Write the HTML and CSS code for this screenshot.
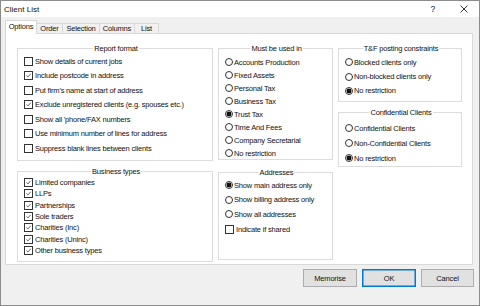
FILE: index.html
```html
<!DOCTYPE html>
<html lang="en">
<head>
    <meta charset="UTF-8">
    <title>Client List</title>
    <link rel="stylesheet" href="styles.css">
</head>
<body>
    <div class="window">
        <div class="titlebar">
            <span class="title">Client List</span>
            <span class="help">?</span>
            <svg class="close" width="8" height="8" viewBox="0 0 8 8">
                <path d="M0.5 0.5 L7.5 7.5 M7.5 0.5 L0.5 7.5" stroke="#222" stroke-width="0.9"/>
            </svg>
        </div>

        <div class="tabs">
            <div class="tab active tab-options">Options</div>
            <div class="tab tab-order">Order</div>
            <div class="tab tab-selection">Selection</div>
            <div class="tab tab-columns">Columns</div>
            <div class="tab tab-list">List</div>
        </div>

        <div class="panel">
            <div class="col col-left">
                <div class="group report">
                    <div class="group-title">Report format</div>
                    <div class="items">
                        <div class="item"><span class="box"></span>Show details of current jobs</div>
                        <div class="item"><span class="box"><svg viewBox="0 0 9 9"><path d="M1.8 4.5 L3.7 6.4 L7.3 2.3"/></svg></span>Include postcode in address</div>
                        <div class="item"><span class="box"></span>Put firm's name at start of address</div>
                        <div class="item"><span class="box"><svg viewBox="0 0 9 9"><path d="M1.8 4.5 L3.7 6.4 L7.3 2.3"/></svg></span>Exclude unregistered clients (e.g. spouses etc.)</div>
                        <div class="item"><span class="box"></span>Show all 'phone/FAX numbers</div>
                        <div class="item"><span class="box"></span>Use minimum number of lines for address</div>
                        <div class="item"><span class="box"></span>Suppress blank lines between clients</div>
                    </div>
                </div>
                <div class="group business">
                    <div class="group-title">Business types</div>
                    <div class="items">
                        <div class="item"><span class="box"><svg viewBox="0 0 9 9"><path d="M1.8 4.5 L3.7 6.4 L7.3 2.3"/></svg></span>Limited companies</div>
                        <div class="item"><span class="box"><svg viewBox="0 0 9 9"><path d="M1.8 4.5 L3.7 6.4 L7.3 2.3"/></svg></span>LLPs</div>
                        <div class="item"><span class="box"><svg viewBox="0 0 9 9"><path d="M1.8 4.5 L3.7 6.4 L7.3 2.3"/></svg></span>Partnerships</div>
                        <div class="item"><span class="box"><svg viewBox="0 0 9 9"><path d="M1.8 4.5 L3.7 6.4 L7.3 2.3"/></svg></span>Sole traders</div>
                        <div class="item"><span class="box"><svg viewBox="0 0 9 9"><path d="M1.8 4.5 L3.7 6.4 L7.3 2.3"/></svg></span>Charities (Inc)</div>
                        <div class="item"><span class="box"><svg viewBox="0 0 9 9"><path d="M1.8 4.5 L3.7 6.4 L7.3 2.3"/></svg></span>Charities (Uninc)</div>
                        <div class="item"><span class="box"><svg viewBox="0 0 9 9"><path d="M1.8 4.5 L3.7 6.4 L7.3 2.3"/></svg></span>Other business types</div>
                    </div>
                </div>
            </div>

            <div class="col col-mid">
                <div class="group must">
                    <div class="group-title">Must be used in</div>
                    <div class="items">
                        <div class="item"><span class="radio"></span>Accounts Production</div>
                        <div class="item"><span class="radio"></span>Fixed Assets</div>
                        <div class="item"><span class="radio"></span>Personal Tax</div>
                        <div class="item"><span class="radio"></span>Business Tax</div>
                        <div class="item"><span class="radio on"></span>Trust Tax</div>
                        <div class="item"><span class="radio"></span>Time And Fees</div>
                        <div class="item"><span class="radio"></span>Company Secretarial</div>
                        <div class="item"><span class="radio"></span>No restriction</div>
                    </div>
                </div>
                <div class="group addresses">
                    <div class="group-title">Addresses</div>
                    <div class="items">
                        <div class="item"><span class="radio on"></span>Show main address only</div>
                        <div class="item"><span class="radio"></span>Show billing address only</div>
                        <div class="item"><span class="radio"></span>Show all addresses</div>
                        <div class="item item-shared"><span class="box"></span>Indicate if shared</div>
                    </div>
                </div>
            </div>

            <div class="col col-right">
                <div class="group posting">
                    <div class="group-title">T&amp;F posting constraints</div>
                    <div class="items">
                        <div class="item"><span class="radio"></span>Blocked clients only</div>
                        <div class="item"><span class="radio"></span>Non-blocked clients only</div>
                        <div class="item"><span class="radio on"></span>No restriction</div>
                    </div>
                </div>
                <div class="group confidential">
                    <div class="group-title">Confidential Clients</div>
                    <div class="items">
                        <div class="item"><span class="radio"></span>Confidential Clients</div>
                        <div class="item"><span class="radio"></span>Non-Confidential Clients</div>
                        <div class="item"><span class="radio on"></span>No restriction</div>
                    </div>
                </div>
            </div>
        </div>

        <div class="buttons">
            <button class="btn">Memorise</button>
            <button class="btn btn-default">OK</button>
            <button class="btn btn-cancel">Cancel</button>
        </div>
    </div>
</body>
</html>
```

FILE: styles.css
```css
body {
    margin: 0;
    font-family: 'Liberation Sans', Arial, sans-serif;
    font-size: 7.5px;
    letter-spacing: -0.18px;
    color: #111;
}

.window {
    width: 480px;
    height: 306px;
    box-sizing: border-box;
    border: 1px solid #8c8c8c;
    background-color: #f0f0f0;
    display: flex;
    flex-direction: column;
}

/* title bar */
.titlebar {
    height: 16px;
    background-color: #fff;
    display: flex;
    align-items: center;
    padding-left: 3px;
}

.title {
    font-size: 8px;
    letter-spacing: 0;
    flex: 1;
}

.help {
    font-size: 8.5px;
    margin-right: 25px;
    color: #222;
}

.close {
    margin-right: 11px;
}

/* tabs */
.tabs {
    display: flex;
    align-items: flex-end;
    margin: 3px 0 0 4px;
    height: 13px;
}

.tab {
    height: 10px;
    line-height: 10px;
    box-sizing: border-box;
    border: 1px solid #d9d9d9;
    border-bottom: none;
    border-left: none;
    background-color: #f0f0f0;
    text-align: center;
}

.tab.active {
    position: relative;
    z-index: 1;
    height: 14px;
    line-height: 12px;
    margin-bottom: -1px;
    background-color: #fff;
    border-left: 1px solid #d9d9d9;
}

.tab-options { width: 32px; }
.tab-order { width: 26px; }
.tab-selection { width: 37px; }
.tab-columns { width: 35px; }
.tab-list { width: 24px; }

/* tab page */
.panel {
    height: 232px;
    box-sizing: border-box;
    margin: 0 6px 0 4px;
    border: 1px solid #d9d9d9;
    background-color: #fff;
    padding: 14px 0 0 11px;
    display: grid;
    grid-template-columns: 196px 115px 124px;
    column-gap: 5px;
    align-items: start;
}

.col {
    display: flex;
    flex-direction: column;
}

.group {
    box-sizing: border-box;
    border: 1px solid #dcdcdc;
    padding: 0 4px 0 6px;
}

.group-title {
    width: fit-content;
    margin: -5px auto 0;
    padding: 0 1px;
    line-height: 9px;
    background-color: #fff;
}

.items {
    display: flex;
    flex-direction: column;
}

.item {
    display: flex;
    align-items: center;
    white-space: nowrap;
}

.box {
    width: 9px;
    height: 9px;
    box-sizing: border-box;
    border: 1px solid #333;
    background-color: #fff;
    margin-right: 2px;
    flex-shrink: 0;
}

.box svg {
    display: block;
    width: 7px;
    height: 7px;
    fill: none;
    stroke: #222;
    stroke-width: 0.9;
}

.radio {
    width: 8px;
    height: 8px;
    box-sizing: border-box;
    border: 1px solid #333;
    border-radius: 50%;
    background-color: #fff;
    margin-right: 1px;
    flex-shrink: 0;
}

.radio.on {
    background: radial-gradient(circle, #111 0, #111 2.2px, #fff 2.7px);
}

/* group sizes and row spacing */
.report { height: 113px; }
.report .items { padding-top: 0.75px; }
.report .item { height: 14.5px; }

.business { height: 91px; margin-top: 10px; }
.business .items { padding-top: 0.6px; }
.business .item { height: 11.4px; }

.must { height: 112px; }
.must .items { padding-top: 2.8px; }
.must .item { height: 13px; }

.addresses { height: 88px; margin-top: 12px; }
.addresses .items { padding-top: 0.75px; }
.addresses .item { height: 14.5px; }
.addresses .item-shared { margin-top: 1px; }

.posting { height: 54px; }
.posting .items { padding-top: 2.2px; }
.posting .item { height: 14.3px; }

.confidential { height: 55px; margin-top: 10px; }
.confidential .items { padding-top: 3.8px; }
.confidential .item { height: 15px; }

/* dialog buttons */
.buttons {
    display: flex;
    justify-content: flex-end;
    gap: 5px;
    margin: 4px 5px 0 0;
}

.btn {
    width: 54px;
    height: 18px;
    padding: 0;
    font-family: inherit;
    font-size: 7.5px;
    letter-spacing: -0.18px;
    color: #111;
    background-color: #e1e1e1;
    border: 1px solid #adadad;
}

.btn-default {
    border-color: #0078d7;
    box-shadow: inset 0 0 0 0.5px #0078d7;
}

.btn-cancel {
    width: 53px;
}
```
